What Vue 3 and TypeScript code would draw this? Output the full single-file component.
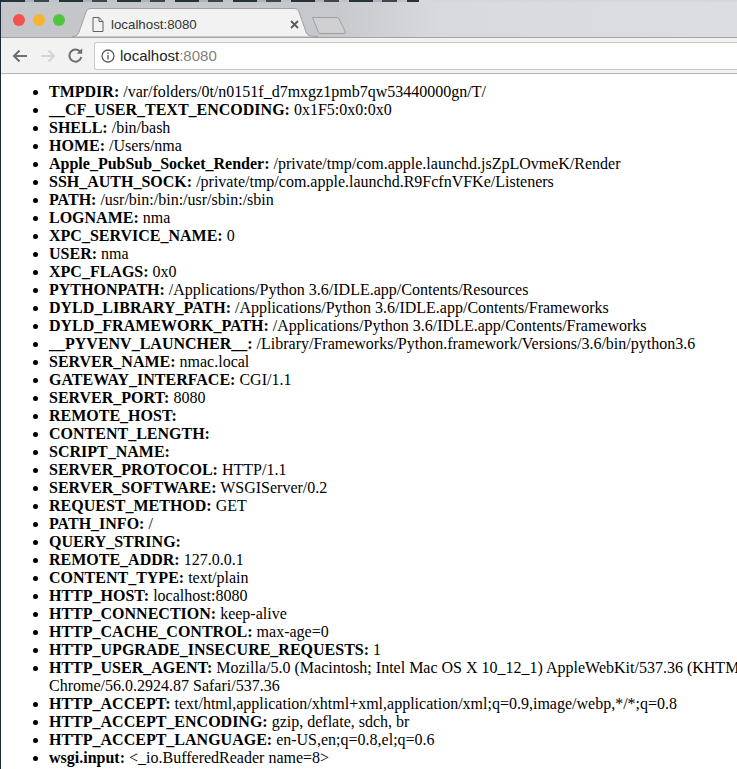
<script setup lang="ts">
interface Row { k: string; v: string }
const rows: Row[] = [
  { k: 'TMPDIR', v: '/var/folders/0t/n0151f_d7mxgz1pmb7qw53440000gn/T/' },
  { k: '__CF_USER_TEXT_ENCODING', v: '0x1F5:0x0:0x0' },
  { k: 'SHELL', v: '/bin/bash' },
  { k: 'HOME', v: '/Users/nma' },
  { k: 'Apple_PubSub_Socket_Render', v: '/private/tmp/com.apple.launchd.jsZpLOvmeK/Render' },
  { k: 'SSH_AUTH_SOCK', v: '/private/tmp/com.apple.launchd.R9FcfnVFKe/Listeners' },
  { k: 'PATH', v: '/usr/bin:/bin:/usr/sbin:/sbin' },
  { k: 'LOGNAME', v: 'nma' },
  { k: 'XPC_SERVICE_NAME', v: '0' },
  { k: 'USER', v: 'nma' },
  { k: 'XPC_FLAGS', v: '0x0' },
  { k: 'PYTHONPATH', v: '/Applications/Python 3.6/IDLE.app/Contents/Resources' },
  { k: 'DYLD_LIBRARY_PATH', v: '/Applications/Python 3.6/IDLE.app/Contents/Frameworks' },
  { k: 'DYLD_FRAMEWORK_PATH', v: '/Applications/Python 3.6/IDLE.app/Contents/Frameworks' },
  { k: '__PYVENV_LAUNCHER__', v: '/Library/Frameworks/Python.framework/Versions/3.6/bin/python3.6' },
  { k: 'SERVER_NAME', v: 'nmac.local' },
  { k: 'GATEWAY_INTERFACE', v: 'CGI/1.1' },
  { k: 'SERVER_PORT', v: '8080' },
  { k: 'REMOTE_HOST', v: '' },
  { k: 'CONTENT_LENGTH', v: '' },
  { k: 'SCRIPT_NAME', v: '' },
  { k: 'SERVER_PROTOCOL', v: 'HTTP/1.1' },
  { k: 'SERVER_SOFTWARE', v: 'WSGIServer/0.2' },
  { k: 'REQUEST_METHOD', v: 'GET' },
  { k: 'PATH_INFO', v: '/' },
  { k: 'QUERY_STRING', v: '' },
  { k: 'REMOTE_ADDR', v: '127.0.0.1' },
  { k: 'CONTENT_TYPE', v: 'text/plain' },
  { k: 'HTTP_HOST', v: 'localhost:8080' },
  { k: 'HTTP_CONNECTION', v: 'keep-alive' },
  { k: 'HTTP_CACHE_CONTROL', v: 'max-age=0' },
  { k: 'HTTP_UPGRADE_INSECURE_REQUESTS', v: '1' },
  { k: 'HTTP_USER_AGENT', v: 'Mozilla/5.0 (Macintosh; Intel Mac OS X 10_12_1) AppleWebKit/537.36 (KHTML, like Gecko) Chrome/56.0.2924.87 Safari/537.36' },
  { k: 'HTTP_ACCEPT', v: 'text/html,application/xhtml+xml,application/xml;q=0.9,image/webp,*/*;q=0.8' },
  { k: 'HTTP_ACCEPT_ENCODING', v: 'gzip, deflate, sdch, br' },
  { k: 'HTTP_ACCEPT_LANGUAGE', v: 'en-US,en;q=0.8,el;q=0.6' },
  { k: 'wsgi.input', v: '<_io.BufferedReader name=8>' },
]
</script>

<template>
  <div class="window">
    <div class="desktop-edge"></div>
    <header class="tabstrip">
      <div class="lights">
        <span class="light red"></span>
        <span class="light yellow"></span>
        <span class="light green"></span>
      </div>
      <div class="tabs">
        <svg class="tab-shape" width="246" height="29" viewBox="0 0 246 29">
          <path d="M0 28.5 C4 28.5 6 27 7 24 L14 4 C15 1.5 16.5 .5 19 .5 L222 .5 C224.5 .5 226 1.5 227 4 L234 24 C235 27 237 28.5 246 28.5 V29 H0 Z" fill="#f2f2f2" stroke="#a0a0a0" />
        </svg>
        <div class="tab-content">
          <svg class="page-icon" width="12" height="15" viewBox="0 0 12 15">
            <path d="M1 .5 H7 L11 4.5 V14.5 H1 Z M7 .5 V4.5 H11" fill="none" stroke="#5f6368" />
          </svg>
          <span class="tab-title">localhost:8080</span>
          <svg class="close-icon" width="9" height="9" viewBox="0 0 9 9">
            <path d="M1 1 L8 8 M8 1 L1 8" stroke="#5a5a5a" stroke-width="1.8" />
          </svg>
        </div>
        <svg class="new-tab" width="34" height="17" viewBox="0 0 34 17">
          <path d="M.5 .5 H24 C26 .5 27 1 27.5 3 L33 14 C33.5 16 33 16.5 31 16.5 H9 C7 16.5 6.5 16 6 14 Z" fill="#d0d0d2" stroke="#9d9ea0" />
        </svg>
      </div>
    </header>
    <div class="toolbar">
      <svg class="nav" width="16" height="14" viewBox="0 0 16 14">
        <path d="M15 7 H2 M7.5 1.5 L2 7 L7.5 12.5" fill="none" stroke="#6e6e6e" stroke-width="2" />
      </svg>
      <svg class="nav forward" width="16" height="14" viewBox="0 0 16 14">
        <path d="M1 7 H14 M8.5 1.5 L14 7 L8.5 12.5" fill="none" stroke="#d4d4d4" stroke-width="2" />
      </svg>
      <svg class="nav reload" width="15" height="15" viewBox="0 0 15 15">
        <path d="M12.4 4.2 A6 6 0 1 0 13.3 9" fill="none" stroke="#6e6e6e" stroke-width="2" />
        <path d="M8.6 5.7 H14.2 V.2 Z" fill="#6e6e6e" />
      </svg>
      <div class="omnibox">
        <svg class="info" width="14" height="14" viewBox="0 0 14 14">
          <circle cx="7" cy="7" r="6" fill="none" stroke="#5f5f5f" stroke-width="1.3" />
          <path d="M7 6 V10.5 M7 3.4 V4.9" stroke="#5f5f5f" stroke-width="1.4" />
        </svg>
        <span class="host">localhost<span class="port">:8080</span></span>
      </div>
    </div>
    <main class="page">
      <ul class="env">
        <li v-for="r in rows" :key="r.k"><b>{{ r.k }}:</b> {{ r.v }}</li>
      </ul>
    </main>
  </div>
</template>

<style>
html, body { margin: 0; background: #fff; overflow: hidden; }
</style>

<style scoped>
.window {
  width: 737px;
  height: 769px;
  overflow: hidden;
  background: #fff;
  border-left: 1px solid #1d2b36;
  box-sizing: border-box;
}
.desktop-edge {
  height: 2px;
  background:
    repeating-linear-gradient(90deg, #26323c 0 24px, #aeb2b6 24px 33px, #3c4650 33px 48px, #c0c2c5 48px 58px) 0 0 / 418px 100% no-repeat,
    #d6d7d9;
}
.tabstrip {
  height: 36px;
  box-sizing: border-box;
  display: flex;
  align-items: flex-start;
  background: linear-gradient(90deg, #c4c6ca 0, #c6c8cc 45%, #d9dadd 60%, #dcdde0 100%);
  border-bottom: 1px solid #a2a2a2;
}
.lights {
  display: flex;
  gap: 8px;
  padding: 12px 0 0 12px;
  width: 68px;
  box-sizing: border-box;
}
.light {
  width: 12px;
  height: 12px;
  border-radius: 50%;
}
.red { background: #f4504e; }
.yellow { background: #f6b52f; }
.green { background: #4fc63d; }
.tabs {
  position: relative;
  height: 35px;
  flex: 1;
  display: flex;
}
.tab-shape {
  position: absolute;
  left: 3px;
  top: 6px;
}
.tab-content {
  position: relative;
  display: flex;
  align-items: center;
  padding-top: 9px;
  box-sizing: border-box;
  height: 35px;
  padding-left: 23px;
}
.page-icon { flex: none; }
.tab-title {
  margin-left: 7px;
  width: 179px;
  font: 13.3px "Liberation Sans", sans-serif;
  color: #333;
}
.close-icon { flex: none; }
.new-tab {
  position: absolute;
  left: 243px;
  top: 15px;
}
.toolbar {
  height: 36px;
  box-sizing: border-box;
  display: flex;
  align-items: center;
  background: #f2f2f2;
  border-bottom: 1px solid #b4b4b4;
  padding: 0 0 0 11px;
}
.nav { flex: none; }
.forward { margin-left: 12px; }
.reload { margin-left: 12px; }
.omnibox {
  margin-left: 11px;
  flex: 1;
  height: 28px;
  display: flex;
  align-items: center;
  background: #fff;
  border: 1px solid #c9c9c9;
  border-right: 0;
  border-radius: 3px 0 0 3px;
  padding-left: 6px;
  box-sizing: border-box;
}
.info { flex: none; }
.host {
  margin-left: 5px;
  font: 15px "Liberation Sans", sans-serif;
  color: #222;
}
.port { color: #808080; }
.page {
  padding: 9px 8px 8px;
  width: 900px;
  box-sizing: border-box;
  font: 16px/18px "Liberation Serif", serif;
  color: #000;
}
.env {
  margin: 0;
  padding-left: 40px;
}
</style>
